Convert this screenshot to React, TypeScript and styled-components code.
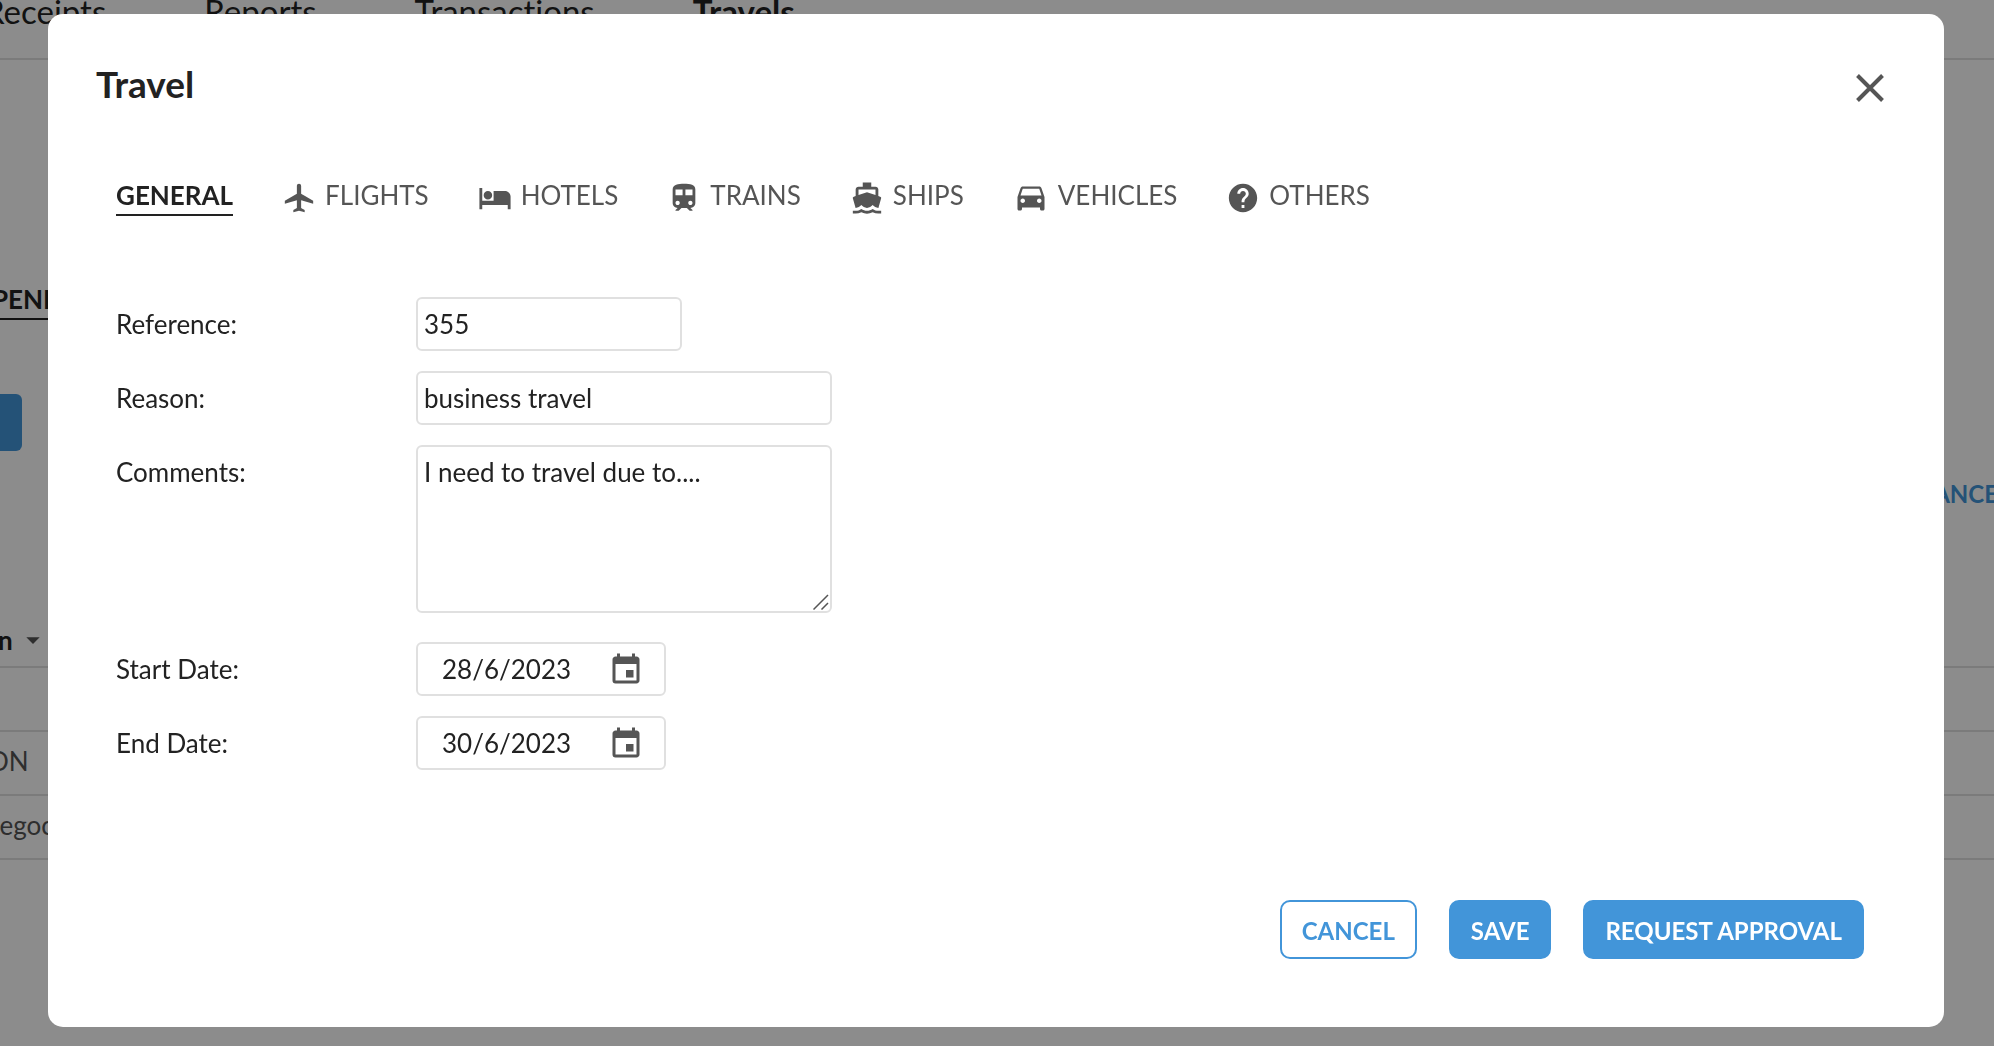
import React from "react";
import styled, { createGlobalStyle } from "styled-components";
import {
  MdArrowDropDown,
  MdDirectionsBoat,
  MdDirectionsCar,
  MdEvent,
  MdHelp,
  MdLocalAirport,
  MdLocalHotel,
  MdTrain,
} from "react-icons/md";
import type { IconType } from "react-icons";

const color = {
  text: "#222222",
  muted: "#555555",
  line: "#e0e0e0",
  primary: "#4295d9",
};

const GlobalStyle = createGlobalStyle`
  *, *::before, *::after { box-sizing: border-box; }
  body {
    margin: 0;
    background: #ffffff;
    color: ${color.text};
    font-family: Lato, sans-serif;
    font-size: 26px;
    line-height: 32px;
    font-variant-ligatures: none;
  }
  button, input, textarea {
    font: inherit;
    color: inherit;
    margin: 0;
  }
  button { cursor: pointer; }
`;

/* ---------- page behind the dialog ---------- */

const Page = styled.div`
  height: 100vh;
  overflow: hidden;
`;

const Scrolled = styled.div`
  margin: 0 -4px 0 -20px;
`;

const MainNav = styled.nav`
  display: flex;
  gap: 98px;
  height: 60px;
  padding-left: 4px;
  border-bottom: 2px solid ${color.line};
  font-size: 33px;
  line-height: 22px;
`;

const NavLink = styled.a<{ $active?: boolean }>`
  color: inherit;
  text-decoration: none;
  white-space: nowrap;
  font-weight: ${(p) => (p.$active ? 700 : 400)};
`;

const StatusTabs = styled.div`
  display: flex;
  padding: 223px 0 0 12px;
`;

const StatusTab = styled.a`
  padding-bottom: 3px;
  border-bottom: 2px solid ${color.text};
  color: inherit;
  font-weight: 700;
  text-decoration: none;
`;

const PageAction = styled.button`
  display: block;
  width: 42px;
  height: 57px;
  margin-top: 74px;
  border: 0;
  border-radius: 6px;
  background: ${color.primary};
`;

const AdvanceRow = styled.div`
  display: flex;
  justify-content: flex-end;
  height: 150px;
  padding-top: 27px;
`;

const AdvanceLink = styled.a`
  color: ${color.primary};
  font-size: 24px;
  font-weight: 700;
  text-decoration: none;
`;

const Table = styled.table`
  width: 100%;
  border-collapse: collapse;
  color: ${color.muted};
`;

const Cell = styled.td`
  height: 64px;
  padding: 0 0 4px 8px;
  border-bottom: 2px solid ${color.line};
`;

const TextCell = styled(Cell)`
  padding-left: 0;
`;

const SortCell = styled.th`
  height: 66px;
  padding: 0;
  border-bottom: 2px solid ${color.line};
  color: ${color.text};
  text-align: left;
  font-weight: 700;
`;

const SortLabel = styled.span`
  display: flex;
  align-items: center;
  gap: 4px;
  padding: 12px 0 0 3px;
`;

/* ---------- dialog ---------- */

const Overlay = styled.div`
  position: fixed;
  inset: 0;
  display: flex;
  padding: 14px 50px 19px 48px;
  background: rgba(0, 0, 0, 0.45);
`;

const Dialog = styled.section`
  display: flex;
  flex: 1;
  flex-direction: column;
  padding: 48px 0 68px;
  border-radius: 15px;
  background: #ffffff;
`;

const Header = styled.header`
  display: flex;
  align-items: flex-start;
  justify-content: space-between;
  padding: 0 60px 0 48px;
`;

const Title = styled.h2`
  margin: 0;
  font-size: 37px;
  font-weight: 700;
  line-height: 44px;
`;

const CloseButton = styled.button`
  display: flex;
  margin-top: 12px;
  padding: 0;
  border: 0;
  background: none;
  color: ${color.muted};
`;

const TabBar = styled.nav`
  display: flex;
  gap: 49px;
  padding: 73px 68px 81px;
`;

const Tab = styled.button<{ $active?: boolean }>`
  display: flex;
  align-items: flex-start;
  gap: 9px;
  height: 37px;
  padding: 0 0 3px;
  border: 0;
  border-bottom: 2px solid ${(p) => (p.$active ? color.text : "transparent")};
  background: none;
  color: ${(p) => (p.$active ? color.text : color.muted)};
  font-weight: ${(p) => (p.$active ? 700 : 400)};
`;

const TabIcon = styled.span`
  display: flex;
  flex: none;
  align-items: flex-end;
  height: 36px;
`;

const Form = styled.form`
  display: flex;
  flex: 1;
  flex-direction: column;
`;

const Fields = styled.div`
  display: flex;
  flex: 1;
  flex-direction: column;
  gap: 20px;
  padding: 0 68px;
`;

const Field = styled.div<{ $spaced?: boolean }>`
  display: grid;
  grid-template-columns: 300px 1fr;
  align-items: start;
  padding-bottom: ${(p) => (p.$spaced ? 9 : 0)}px;
`;

const Label = styled.label`
  line-height: 54px;
`;

const TextInput = styled.input<{ $width: number }>`
  width: ${(p) => p.$width}px;
  height: 54px;
  padding: 0 6px;
  border: 2px solid ${color.line};
  border-radius: 6px;
  background: #ffffff;
  outline: none;
`;

const AreaBox = styled.div`
  position: relative;
  display: flex;
  width: 416px;
`;

const TextArea = styled.textarea`
  width: 100%;
  height: 168px;
  padding: 9px 6px;
  border: 2px solid ${color.line};
  border-radius: 6px;
  outline: none;
  resize: none;
`;

const Grip = styled.svg`
  position: absolute;
  right: 3px;
  bottom: 3px;
`;

const DateBox = styled.div`
  display: flex;
  align-items: center;
  width: 250px;
  height: 54px;
  padding: 0 20px 0 24px;
  border: 2px solid ${color.line};
  border-radius: 6px;
`;

const DateInput = styled.input`
  flex: 1;
  min-width: 0;
  height: 100%;
  padding: 0;
  border: 0;
  background: none;
  outline: none;
`;

const PickerButton = styled.button`
  display: flex;
  padding: 2px 0 0;
  border: 0;
  background: none;
  color: ${color.muted};
`;

const Footer = styled.footer`
  display: flex;
  justify-content: flex-end;
  gap: 32px;
  padding: 0 80px;
`;

const ActionButton = styled.button<{ $outline?: boolean }>`
  height: 59px;
  padding: 2px 20px 0;
  border: 2px solid ${color.primary};
  border-radius: 10px;
  background: ${(p) => (p.$outline ? "#ffffff" : color.primary)};
  color: ${(p) => (p.$outline ? color.primary : "#ffffff")};
  font-size: 24px;
  font-weight: 700;
`;

const tabs: { label: string; icon?: IconType; size?: number }[] = [
  { label: "GENERAL" },
  { label: "FLIGHTS", icon: MdLocalAirport },
  { label: "HOTELS", icon: MdLocalHotel },
  { label: "TRAINS", icon: MdTrain },
  { label: "SHIPS", icon: MdDirectionsBoat },
  { label: "VEHICLES", icon: MdDirectionsCar, size: 36 },
  { label: "OTHERS", icon: MdHelp },
];

function DateField({ id, label, value }: { id: string; label: string; value: string }) {
  return (
    <Field>
      <Label htmlFor={id}>{label}</Label>
      <DateBox>
        <DateInput id={id} type="text" defaultValue={value} />
        <PickerButton type="button" aria-label="Pick a date">
          <MdEvent size={36} />
        </PickerButton>
      </DateBox>
    </Field>
  );
}

function TravelsPage() {
  return (
    <Page aria-hidden="true">
      <Scrolled>
        <MainNav>
          <NavLink href="#receipts">Receipts</NavLink>
          <NavLink href="#reports">Reports</NavLink>
          <NavLink href="#transactions">Transactions</NavLink>
          <NavLink href="#travels" $active>
            Travels
          </NavLink>
        </MainNav>
        <StatusTabs>
          <StatusTab href="#pend">PEND</StatusTab>
        </StatusTabs>
        <PageAction type="button" />
        <AdvanceRow>
          <AdvanceLink href="#advance">ANCE</AdvanceLink>
        </AdvanceRow>
        <Table>
          <thead>
            <tr>
              <SortCell>
                <SortLabel>
                  on
                  <MdArrowDropDown size={32} color={color.muted} />
                </SortLabel>
              </SortCell>
            </tr>
          </thead>
          <tbody>
            <tr>
              <Cell />
            </tr>
            <tr>
              <Cell>ON</Cell>
            </tr>
            <tr>
              <TextCell>Negoc</TextCell>
            </tr>
          </tbody>
        </Table>
      </Scrolled>
    </Page>
  );
}

export default function App() {
  const [active, setActive] = React.useState("GENERAL");

  return (
    <>
      <GlobalStyle />
      <TravelsPage />
      <Overlay>
        <Dialog role="dialog" aria-modal="true" aria-labelledby="travel-title">
          <Header>
            <Title id="travel-title">Travel</Title>
            <CloseButton type="button" aria-label="Close">
              <svg width="28" height="28" viewBox="0 0 28 28" fill="none" stroke="currentColor" strokeWidth="4">
                <path d="M1.5 1.5 26.5 26.5M26.5 1.5 1.5 26.5" />
              </svg>
            </CloseButton>
          </Header>
          <TabBar>
            {tabs.map(({ label, icon: Icon, size = 34 }) => (
              <Tab key={label} type="button" $active={label === active} onClick={() => setActive(label)}>
                {Icon && (
                  <TabIcon>
                    <Icon size={size} />
                  </TabIcon>
                )}
                {label}
              </Tab>
            ))}
          </TabBar>
          <Form onSubmit={(e) => e.preventDefault()}>
            <Fields>
              <Field>
                <Label htmlFor="reference">Reference:</Label>
                <TextInput id="reference" type="text" defaultValue="355" $width={266} />
              </Field>
              <Field>
                <Label htmlFor="reason">Reason:</Label>
                <TextInput id="reason" type="text" defaultValue="business travel" $width={416} />
              </Field>
              <Field $spaced>
                <Label htmlFor="comments">Comments:</Label>
                <AreaBox>
                  <TextArea id="comments" defaultValue="I need to travel due to...." />
                  <Grip width="16" height="16" viewBox="0 0 16 16" fill="none" stroke="#555555" strokeWidth="1.5">
                    <path d="M0.5 15.5 15 1M8.5 15.5 15 9" />
                  </Grip>
                </AreaBox>
              </Field>
              <DateField id="start-date" label="Start Date:" value="28/6/2023" />
              <DateField id="end-date" label="End Date:" value="30/6/2023" />
            </Fields>
            <Footer>
              <ActionButton type="button" $outline>
                CANCEL
              </ActionButton>
              <ActionButton type="submit">SAVE</ActionButton>
              <ActionButton type="button">REQUEST APPROVAL</ActionButton>
            </Footer>
          </Form>
        </Dialog>
      </Overlay>
    </>
  );
}
